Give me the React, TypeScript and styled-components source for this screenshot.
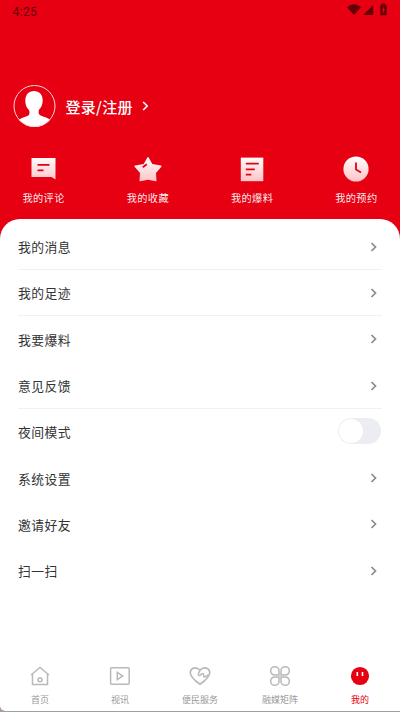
import React from "react";
import styled, { createGlobalStyle } from "styled-components";

const RED = "#e60012";

const GlobalStyle = createGlobalStyle`
  * { box-sizing: border-box; }
  html, body { margin: 0; padding: 0; background: #a0a0a0; }
  body { font-family: Roboto, "Noto Sans CJK SC", sans-serif; overflow: hidden; }
  svg { display: block; flex: none; }
`;

const Screen = styled.div`
  width: 400px;
  height: 711px;
  display: flex;
  flex-direction: column;
  background: ${RED};
  border-radius: 0 0 0 5px;
  overflow: hidden;
`;

const StatusBar = styled.header`
  height: 22px;
  padding: 1px 12px 0 12.5px;
  display: flex;
  align-items: center;
  justify-content: space-between;
  color: #650008;
  font-size: 12px;
  letter-spacing: 0.4px;
`;

const StatusGlyphs = styled.svg`
  margin-top: -3px;
`;

const Profile = styled.section`
  height: 42px;
  margin: 63px 0 0 13px;
  display: flex;
  align-items: center;
`;

const LoginText = styled.span`
  margin: 0 9px 0 9.5px;
  color: #fff;
  font-family: "Noto Sans CJK SC", sans-serif;
  font-size: 15px;
  letter-spacing: 0.3px;
  font-weight: 500;
  line-height: 21px;
`;

const Shortcuts = styled.nav`
  height: 92px;
  padding-top: 29px;
  margin: 0 -8.5px;
  display: grid;
  grid-template-columns: repeat(4, 1fr);
`;

const Shortcut = styled.div`
  display: flex;
  flex-direction: column;
  align-items: center;
  gap: 8px;
  color: rgba(255, 255, 255, 0.94);
  font-family: "Noto Sans CJK SC", sans-serif;
  font-size: 10.2px;
  letter-spacing: 0.4px;
  line-height: 16px;
`;

const Sheet = styled.main`
  flex: 1;
  padding: 4.8px 18px 0;
  background: #fff;
  border-radius: 20px 20px 0 0;
  display: flex;
  flex-direction: column;
`;

const Row = styled.div<{ $line: boolean }>`
  height: 46.3px;
  padding: 1.5px 4px 0 0;
  display: flex;
  align-items: center;
  justify-content: space-between;
  border-bottom: 1px solid ${(p) => (p.$line ? "#f1f1f3" : "transparent")};
  color: #333;
  font-family: "Noto Sans CJK SC", sans-serif;
  font-size: 12.8px;
  letter-spacing: 0.45px;
  line-height: 20px;
`;

const Toggle = styled.span`
  width: 43px;
  height: 26px;
  padding: 1px;
  margin: -2px -3px 0 0;
  border-radius: 13px;
  background: #ecedf2;
`;

const Knob = styled.span`
  display: block;
  width: 24px;
  height: 24px;
  border-radius: 50%;
  background: #fff;
`;

const TabBar = styled.nav`
  height: 54px;
  display: grid;
  grid-template-columns: repeat(5, 1fr);
  background: #fff;
`;

const Tab = styled.div<{ $active?: boolean }>`
  padding-top: 8px;
  display: flex;
  flex-direction: column;
  align-items: center;
  gap: 6px;
  color: ${(p) => (p.$active ? RED : "#999")};
  font-family: "Noto Sans CJK SC", sans-serif;
  font-size: 9px;
  line-height: 14px;
`;

const StatusIcons = () => (
  <StatusGlyphs width="41" height="14" viewBox="0 0 41 14" fill="#650008">
    <path d="M0 4.200Q7 -1.800 14 4.200L7 12Z" />
    <path d="M26.200 2V12H16.200Z" />
    <path fillRule="evenodd" d="M35 .5h3v1.200h1.700v10.600h-6.400V1.700H35ZM37 3.800 34.800 7.500H36v3l2.200-4H37Z" />
  </StatusGlyphs>
);

const Avatar = () => (
  <svg width="43" height="43" viewBox="0 0 43 43">
    <defs>
      <clipPath id="avatar-ring"><circle cx="21.500" cy="21" r="21" /></clipPath>
    </defs>
    <path clipPath="url(#avatar-ring)" fill="#fff" d="M21 6c5.200 0 8.700 3.700 8.700 9.200 0 4.400-1.400 7-3.500 9.300-.8 1-.8 4.100.1 5 1.300 1.300 4.800 2 7.300 3.200 2.200 1 3.800 2 4.800 3.500V43H4v-6.500c1.200-1.400 3-2.600 5-3.400 2.600-1.100 5.600-1.800 6.800-3.100.9-.9.9-4 .1-5-2.100-2.300-3.600-4.900-3.600-9.300C12.300 9.700 15.800 6 21 6Z" />
    <circle cx="21.500" cy="21" r="20.500" fill="none" stroke="#ffd5d8" strokeWidth="1" />
  </svg>
);

const Chevron = ({ light }: { light?: boolean }) =>
  light ? (
    <svg width="7" height="10" viewBox="0 0 7 10" fill="none" stroke="#fff" strokeWidth="1.600">
      <path d="m1.200 1 4 4-4 4" />
    </svg>
  ) : (
    <svg width="8" height="11" viewBox="0 0 8 11" fill="none" stroke="#8a8a8a" strokeWidth="1.700">
      <path d="m1.500 1 4 4-4 4" />
    </svg>
  );

const shortcutShapes: Record<string, React.ReactNode> = {
  comment: (
    <>
      <path d="M2.500 2h24v21.500l-4-2.500h-20Z" />
      <path d="M8.500 8.800h12M8.500 14.300h6" />
    </>
  ),
  star: (
    <>
      <path d="M14.300 1.600q.7-1 1.400 0L19.300 8l8.700 1.500q1 .3.400 1.200L23 17l.5 7.600q0 1-1 .7L15 23.700l-7.500 1.600q-1 .3-1-.7L7 17l-5.400-6.300Q1 9.800 2 9.500L10.700 8Z" />
      <path d="m9.800 11.200 4-3" />
    </>
  ),
  report: (
    <>
      <path d="M3.800 1.600h22.500v23.600H3.800Z" />
      <path d="M8.800 7.700h13M8.800 13.300h9M8.800 18.600h5.500" />
    </>
  ),
  clock: (
    <>
      <circle cx="15" cy="13" r="12.600" />
      <path d="M15 6.500v7.100l5 2.900" />
    </>
  ),
};

const ShortcutShape = styled.svg`
  fill: url(#shortcut-fade);
  & > path + path, & > circle + path {
    fill: none;
    stroke: ${RED};
    stroke-width: 1.8px;
  }
`;

const ShortcutIcon = ({ name }: { name: string }) => (
  <ShortcutShape width="30" height="26" viewBox="0 0 30 26">
    <defs>
      <linearGradient id="shortcut-fade" x1="0" y1="0" x2="0" y2="26" gradientUnits="userSpaceOnUse">
        <stop stopColor="#fff" />
        <stop offset="1" stopColor="#ffc2c6" />
      </linearGradient>
    </defs>
    {shortcutShapes[name]}
  </ShortcutShape>
);

const tabShapes: Record<string, React.ReactNode> = {
  home: (
    <>
      <path d="m2 10 9-7.500 9 7.500M3.500 9v10.500h15V9" />
      <circle cx="11" cy="14.800" r="2" />
    </>
  ),
  video: (
    <>
      <rect x="1.600" y="2.800" width="18.600" height="16.500" rx="1" />
      <path d="M8.300 7.300v7.200l5.400-3.600Z" />
    </>
  ),
  heart: (
    <>
      <path strokeWidth="1.700" strokeLinejoin="round" d="M11 19.200c-4-2.700-9.700-7-9.700-11.400C1.300 2.600 7.400 1.300 11 5.300c3.600-4 9.700-2.700 9.700 2.500 0 4.400-5.700 8.700-9.700 11.400Z" />
      <path strokeWidth="1.500" d="M11 5.300 9.300 9c-.4 1.400 1 2 2 1.200l1.400-1.300c1.400-1 2.300.2 1.900 1.600-.3 1.300.8 1.900 1.700 1.100L19.400 10" />
    </>
  ),
  matrix: (
    <path d="M10 10H5.800A4 4 0 0 1 1.700 6V5.800A4.100 4.100 0 0 1 10 5.800ZM12 10V5.800A4.100 4.100 0 0 1 20.300 5.800V6A4 4 0 0 1 16.200 10ZM10 12v4.200A4.100 4.100 0 0 1 1.700 16.200V16A4 4 0 0 1 5.800 12ZM12 12h4.200A4 4 0 0 1 20.300 16V16.200A4.100 4.100 0 0 1 12 16.200Z" />
  ),
  me: (
    <>
      <circle cx="11" cy="11" r="9.100" fill={RED} stroke="none" />
      <path d="M8.300 7v4M13.500 7v4" stroke="#fff" strokeWidth="1.600" />
    </>
  ),
};

const TabIcon = ({ name }: { name: string }) => (
  <svg width="22" height="22" viewBox="0 0 22 22" fill="none" stroke="#b9b9b9" strokeWidth="1.500">
    {tabShapes[name]}
  </svg>
);

const shortcuts = [
  ["comment", "我的评论"],
  ["star", "我的收藏"],
  ["report", "我的爆料"],
  ["clock", "我的预约"],
];

const rows = [
  { label: "我的消息", line: true },
  { label: "我的足迹", line: true },
  { label: "我要爆料", line: false },
  { label: "意见反馈", line: true },
  { label: "夜间模式", line: false, toggle: true },
  { label: "系统设置", line: false },
  { label: "邀请好友", line: false },
  { label: "扫一扫", line: false },
];

const tabs = [
  ["home", "首页"],
  ["video", "视讯"],
  ["heart", "便民服务"],
  ["matrix", "融媒矩阵"],
  ["me", "我的"],
];

export default function App() {
  return (
    <>
      <GlobalStyle />
      <Screen>
        <StatusBar>
          <span>4:25</span>
          <StatusIcons />
        </StatusBar>
        <Profile>
          <Avatar />
          <LoginText>登录/注册</LoginText>
          <Chevron light />
        </Profile>
        <Shortcuts>
          {shortcuts.map(([name, label]) => (
            <Shortcut key={name}>
              <ShortcutIcon name={name} />
              {label}
            </Shortcut>
          ))}
        </Shortcuts>
        <Sheet>
          {rows.map((row) => (
            <Row key={row.label} $line={row.line}>
              {row.label}
              {row.toggle ? <Toggle><Knob /></Toggle> : <Chevron />}
            </Row>
          ))}
        </Sheet>
        <TabBar>
          {tabs.map(([name, label]) => (
            <Tab key={name} $active={name === "me"}>
              <TabIcon name={name} />
              {label}
            </Tab>
          ))}
        </TabBar>
      </Screen>
    </>
  );
}
